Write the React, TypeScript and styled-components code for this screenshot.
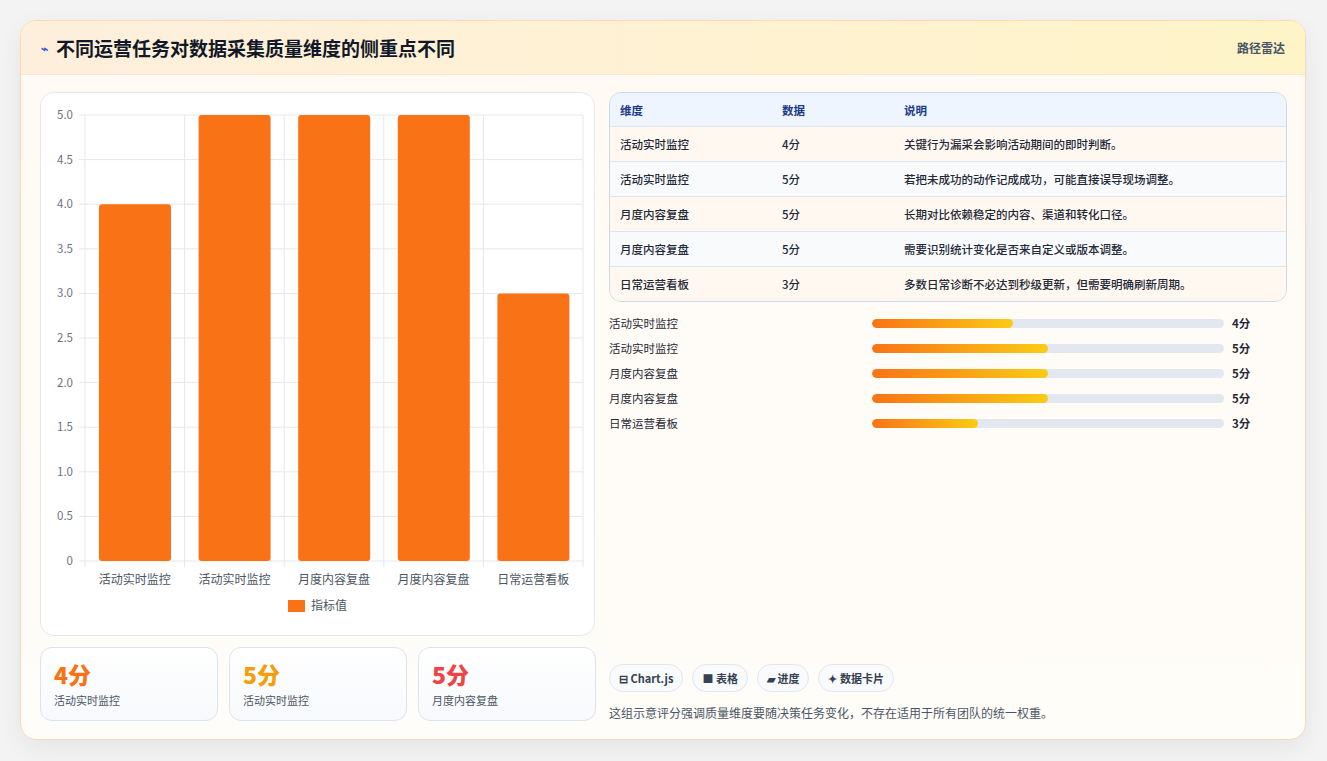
import React from "react";
import styled, { createGlobalStyle } from "styled-components";

const G = createGlobalStyle`
  body { margin: 0; background: #f3f4f6; font-family: "Noto Sans CJK SC", "Noto Sans", sans-serif; }
  * { box-sizing: border-box; }
`;
const Page = styled.div`padding: 20px 21px 20px 20px; height: 761px; background: #f3f3f3;`;
const Card = styled.div`
  width: 1286px; height: 720px; border-radius: 16px; border: 1px solid #fad9b0;
  background: linear-gradient(180deg, #fffaf3, #fffdf9); overflow: hidden;
  box-shadow: 0 8px 24px rgba(0,0,0,0.06); display: flex; flex-direction: column;
`;
const Header = styled.div`
  height: 55px; display: flex; align-items: center; justify-content: space-between;
  padding: 0 20px; background: linear-gradient(90deg, #feefdd, #fef4c8);
  border-bottom: 1px solid #f3e6d2;
`;
const Title = styled.h1`margin: 0; font-size: 19px; font-weight: 700; color: #111827; display: flex; align-items: center; gap: 8px;`;
const Tag = styled.span`font-size: 12px; color: #4b5563; font-weight: 600;`;
const Body = styled.div`flex: 1; display: grid; grid-template-columns: 555px 678px; gap: 14px; padding: 17px 19px 18px 19px;`;
const Col = styled.div`display: flex; flex-direction: column; gap: 11px;`;
const ChartBox = styled.div`height: 544px; background: #fff; border: 1px solid #e5e7eb; border-radius: 14px; overflow: hidden;`;
const Stats = styled.div`display: grid; grid-template-columns: repeat(3, 178px); gap: 11px;`;
const Stat = styled.div`height: 74px; border: 1px solid #dbe3ee; border-radius: 12px; background: linear-gradient(180deg,#fff,#f7f9fc); padding: 10px 13px;`;
const Big = styled.div<{ $c: string }>`font-size: 23px; font-weight: 800; color: ${p => p.$c}; line-height: 32px;`;
const Small = styled.div`font-size: 11px; color: #4b5563; margin-top: 2px;`;
const Table = styled.div`border: 1px solid #cfd8e6; border-radius: 12px; overflow: hidden; background: #fff;`;
const Row = styled.div<{ $bg: string; $head?: boolean }>`
  display: grid; grid-template-columns: 162px 122px 1fr; height: ${p => (p.$head ? 33 : 35)}px;
  align-items: center; padding-left: 10px; background: ${p => p.$bg};
  border-top: ${p => (p.$head ? "none" : "1px solid #dfe6ef")};
  font-size: 11.5px; font-weight: ${p => (p.$head ? 700 : 500)}; color: ${p => (p.$head ? "#1e3a8a" : "#1f2937")};
`;
const Bars = styled.div`display: flex; flex-direction: column; gap: 7px; margin-top: 0; flex: 1;`;
const BarRow = styled.div`display: grid; grid-template-columns: 255px 352px 40px; column-gap: 8px; align-items: center; height: 18px; font-size: 11.5px; color: #1f2937;`;
const Track = styled.div`height: 9px; border-radius: 5px; background: #e3e8f0; overflow: hidden;`;
const Fill = styled.div`height: 100%; border-radius: 5px; background: linear-gradient(90deg, #f97316, #facc15);`;
const Val = styled.span`font-weight: 700;`;
const Chips = styled.div`display: flex; gap: 9px;`;
const Chip = styled.span`height: 28px; padding: 0 9px; border: 1px solid #e2e6ee; border-radius: 14px; background: #f8fafc; font-size: 11px; font-weight: 700; color: #374151; display: inline-flex; align-items: center; gap: 4px;`;
const Note = styled.p`margin: 12px 0 0; font-size: 12px; color: #4b5563;`;

const rows = [
  ["活动实时监控", 4, "关键行为漏采会影响活动期间的即时判断。"],
  ["活动实时监控", 5, "若把未成功的动作记成成功，可能直接误导现场调整。"],
  ["月度内容复盘", 5, "长期对比依赖稳定的内容、渠道和转化口径。"],
  ["月度内容复盘", 5, "需要识别统计变化是否来自定义或版本调整。"],
  ["日常运营看板", 3, "多数日常诊断不必达到秒级更新，但需要明确刷新周期。"],
] as const;

function Chart() {
  const x0 = 44, x1 = 542, y0 = 468, y5 = 22;
  const cw = (x1 - x0) / 5;
  const yv = (v: number) => y0 - (v / 5) * (y0 - y5);
  const ticks = [0, 0.5, 1, 1.5, 2, 2.5, 3, 3.5, 4, 4.5, 5];
  const font = '"Noto Sans CJK SC", sans-serif';
  return (
    <svg width="555" height="544" style={{ display: "block" }}>
      {ticks.map(t => (
        <g key={t}>
          <line x1={x0 - 6} x2={x1} y1={yv(t)} y2={yv(t)} stroke="#e5e7eb" />
          <text x={x0 - 12} y={yv(t) + 4} textAnchor="end" fontSize="11.5" fill="#6b7280" fontFamily={font}>{t === 0 ? "0" : t.toFixed(1)}</text>
        </g>
      ))}
      {[0, 1, 2, 3, 4, 5].map(i => (
        <line key={i} x1={x0 + i * cw} x2={x0 + i * cw} y1={y5} y2={y0 + 6} stroke="#e5e7eb" />
      ))}
      {rows.map((r, i) => (
        <g key={i}>
          <rect x={x0 + i * cw + 14} y={yv(r[1])} width={72} height={y0 - yv(r[1])} rx="3" fill="#f97316" />
          <text x={x0 + i * cw + cw / 2} y={491} textAnchor="middle" fontSize="12" fill="#4b5563" fontFamily={font}>{r[0]}</text>
        </g>
      ))}
      <rect x="247" y="507" width="17" height="12" fill="#f97316" />
      <text x="270" y="517" fontSize="12" fill="#4b5563" fontFamily={font}>指标值</text>
    </svg>
  );
}

export default function App() {
  return (
    <Page>
      <G />
      <Card>
        <Header>
          <Title><span style={{ color: "#3b5bdb", fontSize: 12 }}>⌁</span>不同运营任务对数据采集质量维度的侧重点不同</Title>
          <Tag>路径雷达</Tag>
        </Header>
        <Body>
          <Col>
            <ChartBox><Chart /></ChartBox>
            <Stats>
              <Stat><Big $c="#f97316">4分</Big><Small>活动实时监控</Small></Stat>
              <Stat><Big $c="#f59e0b">5分</Big><Small>活动实时监控</Small></Stat>
              <Stat><Big $c="#ef4444">5分</Big><Small>月度内容复盘</Small></Stat>
            </Stats>
          </Col>
          <Col style={{ gap: 12 }}>
            <Table>
              <Row $head $bg="#eef5fe"><span>维度</span><span>数据</span><span>说明</span></Row>
              {rows.map((r, i) => (
                <Row key={i} $bg={i % 2 ? "#f8fafc" : "#fff8f1"}><span>{r[0]}</span><span>{r[1]}分</span><span>{r[2]}</span></Row>
              ))}
            </Table>
            <Bars>
              {rows.map((r, i) => (
                <BarRow key={i}><span>{r[0]}</span><Track><Fill style={{ width: `${r[1] * 10}%` }} /></Track><Val>{r[1]}分</Val></BarRow>
              ))}
            </Bars>
            <div>
              <Chips>
                <Chip>⊟ Chart.js</Chip><Chip>■ 表格</Chip><Chip>▰ 进度</Chip><Chip>✦ 数据卡片</Chip>
              </Chips>
              <Note>这组示意评分强调质量维度要随决策任务变化，不存在适用于所有团队的统一权重。</Note>
            </div>
          </Col>
        </Body>
      </Card>
    </Page>
  );
}
